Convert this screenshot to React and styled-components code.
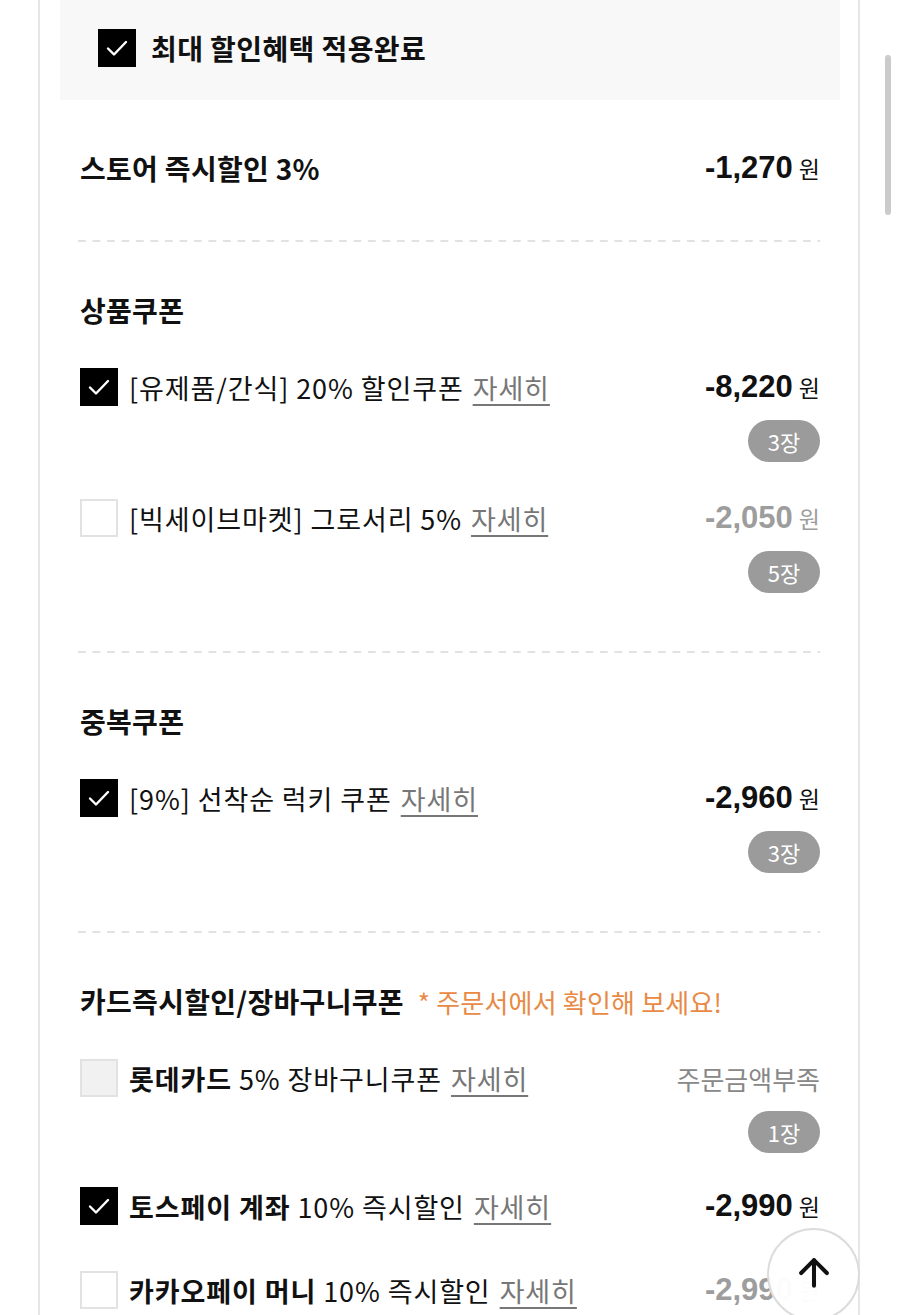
import React from 'react';
import styled, { createGlobalStyle } from 'styled-components';
import { ArrowUp } from 'lucide-react';

const GlobalStyle = createGlobalStyle`
  html, body {
    margin: 0;
    padding: 0;
    background: #ffffff;
    overflow: hidden;
  }
  body {
    font-family: "Noto Sans CJK KR", "Noto Sans", sans-serif;
    color: #111;
  }
`;

const Page = styled.div`
  position: relative;
  width: 900px;
  height: 1315px;
  overflow: hidden;
`;

const Panel = styled.div`
  margin-left: 38px;
  width: 780px;
  min-height: 1315px;
  border-left: 2px solid #e6e6e6;
  border-right: 2px solid #e6e6e6;
  padding: 0 18px 0 20px;
`;

const Banner = styled.div`
  height: 100px;
  background: #f8f8f8;
  display: flex;
  align-items: center;
  padding: 0 0 4px 38px;
  box-sizing: border-box;
  gap: 15px;
`;

const BannerText = styled.span`
  font-size: 28px;
  font-weight: 700;
  letter-spacing: 0.4px;
  color: #111;
`;

const Content = styled.div`
  padding: 0 20px;
`;

const Section = styled.section`
  padding: ${(p) => p.$top || 50}px 0 ${(p) => p.$bottom || 22}px;
`;

const Dashed = styled.div`
  height: 2px;
  margin-left: -2px;
  background-image: linear-gradient(to right, #e2e2e2 8px, transparent 8px);
  background-size: 14.5px 2px;
  background-repeat: repeat-x;
`;

const TitleRow = styled.div`
  display: flex;
  align-items: center;
  justify-content: space-between;
  height: 36px;
  margin-bottom: ${(p) => p.$mb || 0}px;
`;

const Title = styled.h3`
  margin: 0;
  font-size: 28px;
  font-weight: 700;
  letter-spacing: 0.3px;
  color: #111;
  display: flex;
  align-items: baseline;
  gap: 14px;
  white-space: nowrap;
`;

const Notice = styled.span`
  font-size: 26px;
  font-weight: 400;
  color: #e88a45;
  letter-spacing: 0.2px;
`;

const Item = styled.div`
  margin-bottom: ${(p) => p.$mb}px;
`;

const ItemRow = styled.div`
  display: flex;
  align-items: center;
  justify-content: space-between;
  height: 40px;
`;

const Left = styled.div`
  display: flex;
  align-items: center;
  gap: 11px;
`;

const Box = styled.span`
  width: 38px;
  height: 38px;
  box-sizing: border-box;
  display: inline-flex;
  align-items: center;
  justify-content: center;
  flex-shrink: 0;
  background: ${(p) => (p.$checked ? '#000' : p.$disabled ? '#f1f1f1' : '#fff')};
  border: 2px solid ${(p) => (p.$checked ? '#000' : '#e2e2e2')};
`;

const Label = styled.span`
  font-size: 27px;
  font-weight: 400;
  color: #111;
  letter-spacing: 0.9px;
  white-space: nowrap;
  b {
    font-weight: 700;
  }
`;

const More = styled.span`
  margin-left: 9px;
  color: #777;
  text-decoration: underline;
  text-underline-offset: 5px;
  text-decoration-thickness: 1.5px;
`;

const Price = styled.div`
  display: flex;
  align-items: baseline;
  gap: 6px;
  color: ${(p) => (p.$muted ? '#9d9d9d' : '#111')};
`;

const Amount = styled.span`
  font-family: "Liberation Sans", "Noto Sans", sans-serif;
  font-size: 31px;
  font-weight: 700;
  letter-spacing: 0;
`;

const Won = styled.span`
  font-size: 23px;
  font-weight: 400;
`;

const Status = styled.span`
  font-size: 26px;
  color: #888;
`;

const BadgeRow = styled.div`
  display: flex;
  justify-content: flex-end;
  margin-top: 13px;
`;

const Badge = styled.span`
  width: 72px;
  height: 42px;
  border-radius: 21px;
  background: #9b9b9b;
  color: #fff;
  font-size: 22px;
  display: inline-flex;
  align-items: center;
  justify-content: center;
`;

const ScrollThumb = styled.div`
  position: absolute;
  left: 885px;
  top: 55px;
  width: 6px;
  height: 160px;
  border-radius: 3px;
  background: #cbcbcb;
`;

const TopButton = styled.button`
  position: absolute;
  left: 767px;
  top: 1228px;
  width: 93px;
  height: 93px;
  border-radius: 50%;
  border: 2px solid #dcdcdc;
  background: rgba(255, 255, 255, 0.97);
  display: flex;
  align-items: center;
  justify-content: center;
  padding: 0 0 4px;
  color: #111;
`;

const Check = () => (
  <svg width="26" height="26" viewBox="0 0 26 26" fill="none">
    <path d="M4 13.5l6 6L22 7" stroke="#fff" strokeWidth="2.4" strokeLinecap="round" strokeLinejoin="round" />
  </svg>
);

const CheckBox = ({ checked, disabled }) => (
  <Box $checked={checked} $disabled={disabled}>{checked && <Check />}</Box>
);

const CouponItem = ({ checked, disabled, label, price, muted, status, count, mb }) => (
  <Item $mb={mb}>
    <ItemRow>
      <Left>
        <CheckBox checked={checked} disabled={disabled} />
        <Label>
          {label}
          <More>자세히</More>
        </Label>
      </Left>
      {status ? (
        <Status>{status}</Status>
      ) : (
        <Price $muted={muted}>
          <Amount>{price}</Amount>
          <Won>원</Won>
        </Price>
      )}
    </ItemRow>
    {count && (
      <BadgeRow>
        <Badge>{count}</Badge>
      </BadgeRow>
    )}
  </Item>
);

export default function App() {
  return (
    <Page>
      <GlobalStyle />
      <Panel>
        <Banner>
          <CheckBox checked />
          <BannerText>최대 할인혜택 적용완료</BannerText>
        </Banner>
        <Content>
          <Section $top={50} $bottom={54}>
            <TitleRow>
              <Title>스토어 즉시할인 3%</Title>
              <Price>
                <Amount>-1,270</Amount>
                <Won>원</Won>
              </Price>
            </TitleRow>
          </Section>
          <Dashed />
          <Section $top={50} $bottom={22}>
            <TitleRow $mb={39}>
              <Title>상품쿠폰</Title>
            </TitleRow>
            <CouponItem checked label="[유제품/간식] 20% 할인쿠폰" price="-8,220" count="3장" mb={36} />
            <CouponItem label="[빅세이브마켓] 그로서리 5%" price="-2,050" muted count="5장" mb={36} />
          </Section>
          <Dashed />
          <Section $top={50} $bottom={22}>
            <TitleRow $mb={39}>
              <Title>중복쿠폰</Title>
            </TitleRow>
            <CouponItem checked label="[9%] 선착순 럭키 쿠폰" price="-2,960" count="3장" mb={36} />
          </Section>
          <Dashed />
          <Section $top={50} $bottom={22}>
            <TitleRow $mb={39}>
              <Title>
                카드즉시할인/장바구니쿠폰
                <Notice>* 주문서에서 확인해 보세요!</Notice>
              </Title>
            </TitleRow>
            <CouponItem disabled label={<><b>롯데카드</b> 5% 장바구니쿠폰</>} status="주문금액부족" count="1장" mb={33} />
            <CouponItem checked label={<><b>토스페이 계좌</b> 10% 즉시할인</>} price="-2,990" mb={44} />
            <CouponItem label={<><b>카카오페이 머니</b> 10% 즉시할인</>} price="-2,990" muted mb={0} />
          </Section>
        </Content>
      </Panel>
      <ScrollThumb />
      <TopButton aria-label="맨 위로">
        <ArrowUp size={44} strokeWidth={2.2} />
      </TopButton>
    </Page>
  );
}
